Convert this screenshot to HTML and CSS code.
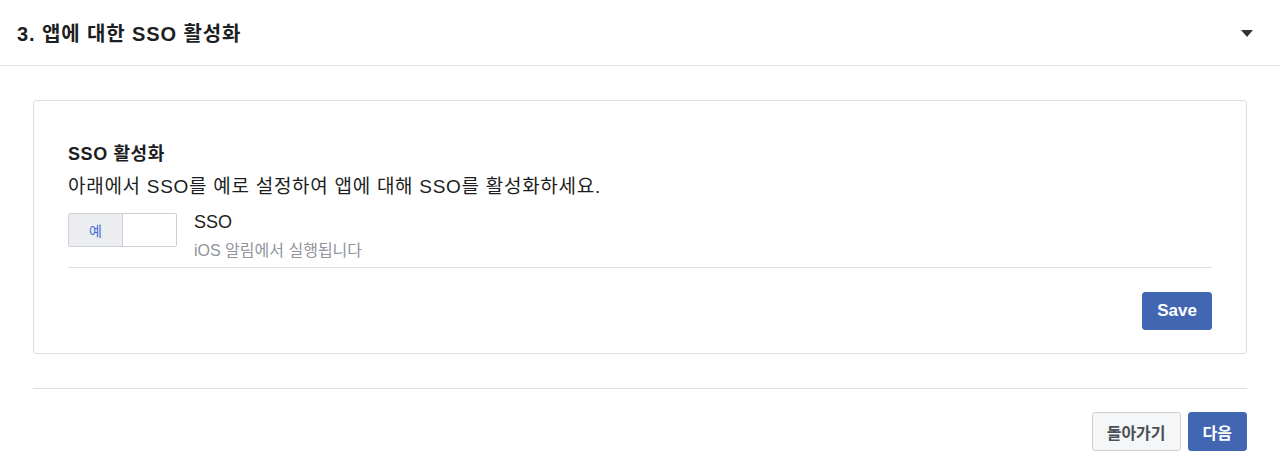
FILE: index.html
```html
<!DOCTYPE html>
<html lang="ko">
<head>
<meta charset="utf-8">
<link rel="stylesheet" href="styles.css">
</head>
<body>
<div class="header">
  <h2 class="title">3. 앱에 대한 SSO 활성화</h2>
  <svg class="caret" width="12" height="8" viewBox="0 0 12 8"><path d="M0 0 H12 L6 7 Z" fill="#333"/></svg>
</div>
<div class="content">
  <div class="card">
    <div class="card-title">SSO 활성화</div>
    <div class="card-desc">아래에서 SSO를 예로 설정하여 앱에 대해 SSO를 활성화하세요.</div>
    <div class="setting">
      <div class="toggle">
        <div class="seg seg-on">예</div>
        <div class="seg"></div>
      </div>
      <div class="setting-text">
        <div class="setting-label">SSO</div>
        <div class="setting-sub">iOS 알림에서 실행됩니다</div>
      </div>
    </div>
    <div class="card-footer">
      <button class="btn btn-primary btn-save">Save</button>
    </div>
  </div>
  <div class="footer">
    <button class="btn btn-secondary">돌아가기</button>
    <button class="btn btn-primary">다음</button>
  </div>
</div>
</body>
</html>
```
FILE: styles.css
```css
* { box-sizing: border-box; }
body {
  margin: 0;
  background: #fff;
  font-family: "Liberation Sans", "Noto Sans CJK KR", sans-serif;
  color: #1c1e21;
}
.header {
  height: 66px;
  border-bottom: 1px solid #e5e5e5;
  display: flex;
  align-items: center;
  justify-content: space-between;
  padding: 0 27px 0 17px;
}
.title {
  margin: 0;
  font-size: 20px;
  font-weight: bold;
  letter-spacing: 0.9px;
  color: #1c1e21;
}
.caret { display: block; margin-top: 2px; }
.content { padding: 34px 33px 0; }
.card {
  border: 1px solid #dddfe2;
  border-radius: 3px;
  padding: 42px 34px 23px;
}
.card-title {
  font-size: 18px;
  font-weight: bold;
  letter-spacing: 0.6px;
  line-height: 22px;
}
.card-desc {
  font-size: 19px;
  letter-spacing: 0.72px;
  line-height: 24px;
  margin-top: 10px;
}
.setting {
  display: flex;
  gap: 17px;
  margin-top: 13px;
  padding-bottom: 6px;
  border-bottom: 1px solid #dddfe2;
}
.toggle {
  display: flex;
  width: 109px;
  height: 34px;
  border: 1px solid #ccd0d5;
  border-radius: 2px;
  overflow: hidden;
  margin-top: 1px;
}
.seg { flex: 1; background: #fff; }
.seg-on {
  flex: 0 0 54px;
  background: #ebedf0;
  border-right: 1px solid #ccd0d5;
  color: #3b6fd4;
  font-size: 14px;
  display: flex;
  align-items: center;
  justify-content: center;
}
.setting-label { font-size: 18px; line-height: 20px; color: #1c1e21; }
.setting-sub { font-size: 16px; line-height: 20px; color: #90949c; margin-top: 9px; }
.card-footer {
  display: flex;
  justify-content: flex-end;
  padding-top: 24px;
}
.btn {
  font-family: inherit;
  font-size: 16px;
  font-weight: bold;
  border-radius: 3px;
  cursor: pointer;
  height: 39px;
  padding: 0 14px;
}
.btn-primary {
  background: #4267b2;
  border: 1px solid #4267b2;
  color: #fff;
}
.btn-save { width: 70px; height: 38px; padding: 0; font-size: 17px; }
.btn-secondary {
  background: #f5f6f7;
  border: 1px solid #ccd0d5;
  color: #4b4f56;
}
.footer {
  margin-top: 34px;
  border-top: 1px solid #dddfe2;
  padding-top: 23px;
  display: flex;
  justify-content: flex-end;
  gap: 7px;
}
```
